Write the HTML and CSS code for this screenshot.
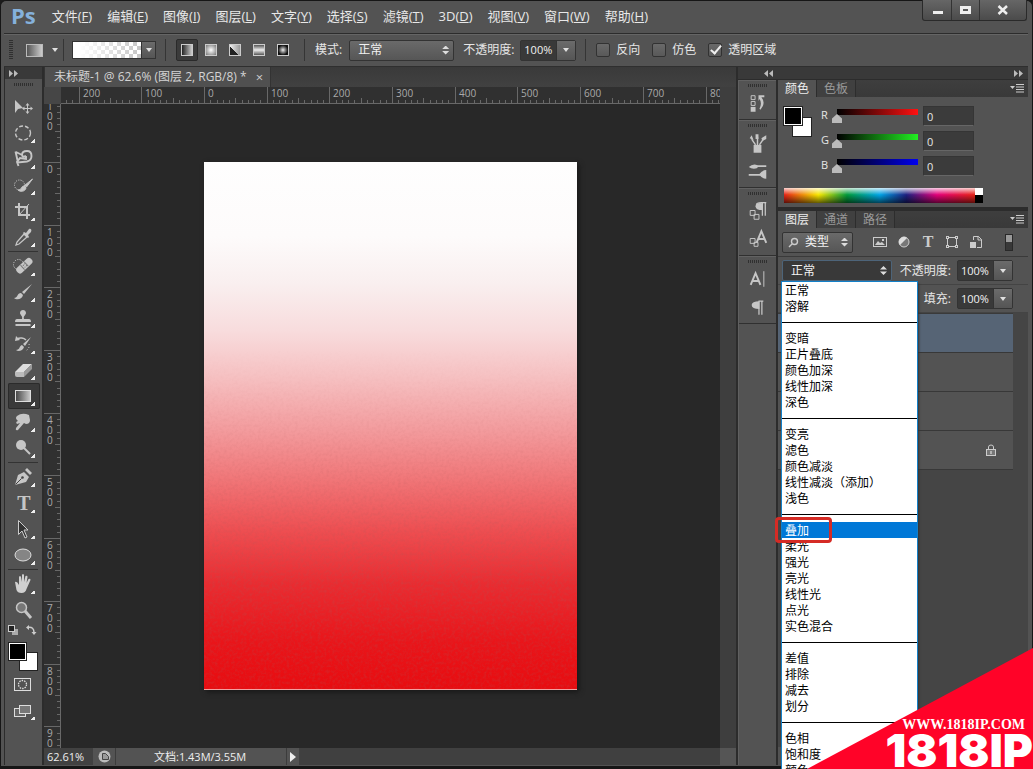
FILE: index.html
```html
<!DOCTYPE html>
<html lang="zh-CN">
<head>
<meta charset="utf-8">
<title>未标题-1</title>
<link rel="stylesheet" href="styles.css">
</head>
<body>
<div class="app">
  <header class="menubar">
    <span class="logo">Ps</span>
    <nav class="menus">
      <a href="#">文件(<u>F</u>)</a><a href="#">编辑(<u>E</u>)</a><a href="#">图像(<u>I</u>)</a><a href="#">图层(<u>L</u>)</a><a href="#">文字(<u>Y</u>)</a><a href="#">选择(<u>S</u>)</a><a href="#">滤镜(<u>T</u>)</a><a href="#">3D(<u>D</u>)</a><a href="#">视图(<u>V</u>)</a><a href="#">窗口(<u>W</u>)</a><a href="#">帮助(<u>H</u>)</a>
    </nav>
    <div class="winbtns">
      <button aria-label="最小化"><svg width="28" height="20"><path d="M10 11h10v3H10z" fill="#eee"/></svg></button>
      <button aria-label="最大化"><svg width="27" height="20"><path d="M9.500 7.500h8v5h-8z" fill="none" stroke="#eee" stroke-width="3"/></svg></button>
      <button class="wide" aria-label="关闭"><svg width="46" height="20"><path d="M18.500 6l8.500 8M27 6l-8.500 8" stroke="#eee" stroke-width="2.500"/></svg></button>
    </div>
  </header>

  <section class="options">
    <span class="grip-v"></span>
    <button class="preset" aria-label="渐变工具预设"><span class="grad-icon"></span><span class="caret"></span></button>
    <span class="divider"></span>
    <button class="gradient-pick" aria-label="编辑渐变"><span class="checker"></span><span class="drop"><span class="caret"></span></span></button>
    <span class="divider"></span>
    <div class="shapes">
      <button class="on" aria-label="线性渐变"><span class="gi linear"></span></button>
      <button aria-label="径向渐变"><span class="gi radial"></span></button>
      <button aria-label="角度渐变"><span class="gi angle"></span></button>
      <button aria-label="对称渐变"><span class="gi reflect"></span></button>
      <button aria-label="菱形渐变"><span class="gi diamond"></span></button>
    </div>
    <span class="divider"></span>
    <label class="field"><span>模式:</span><span class="pick mode"><select><option>正常</option></select><i class="updown"></i></span></label>
    <label class="field opacity"><span>不透明度:</span><span class="num"><input type="text" value="100%"><span class="drop"><span class="caret"></span></span></span></label>
    <span class="divider"></span>
    <div class="checks">
      <label><input type="checkbox">反向</label>
      <label><input type="checkbox">仿色</label>
      <label><input type="checkbox" checked>透明区域</label>
    </div>
  </section>

  <main class="work">
    <aside class="toolbar">
      <div class="strip"><svg width="10" height="7"><path d="M0 0l4 3.500-4 3.500zM5 0l4 3.500L5 7z" fill="#bbb"/></svg></div>
      <span class="grip-h"></span>
      <div class="tools">
        <button aria-label="移动"><svg viewBox="0 0 32 26"><path d="M7 6v13l3-4 5-1z" fill="#c6c6c6"/><path d="M19.500 10v9M15 14.500h9" stroke="#c6c6c6" fill="none"/><path d="M17.500 11.500l2-2.500 2 2.500zM17.500 17.500l2 2.500 2-2.500zM16.500 12.500l-2.500 2 2.500 2zM22.500 12.500l2.500 2-2.500 2z" fill="#c6c6c6"/></svg></button>
        <button class="more" aria-label="选框"><svg viewBox="0 0 32 26"><ellipse cx="15" cy="13" rx="7.500" ry="7" fill="none" stroke="#c6c6c6" stroke-width="1.400" stroke-dasharray="4 2"/></svg></button>
        <button class="more" aria-label="套索"><svg viewBox="0 0 32 26"><path d="M7.500 5.500l2.500 11 9-1q4.500-1 4.500-5.500 0-5-4.500-5-5 0-5 4 0 2.500 4 1M8 6l6 3M18 10v3l-6-1-3 4 1.500 4" fill="none" stroke="#c6c6c6" stroke-width="1.900"/></svg></button>
        <button class="more" aria-label="快速选择"><svg viewBox="0 0 32 26"><circle cx="11.500" cy="13" r="5" fill="none" stroke="#c6c6c6" stroke-dasharray="1.200 1.200"/><path d="M24.500 7l-6 8-2-1.500zM10 18c4 0 3-4 6-4l2 2c-1 4-6 4-8 2" fill="#c6c6c6" stroke="#c6c6c6"/></svg></button>
        <button class="more" aria-label="裁剪"><svg viewBox="0 0 32 26"><path d="M11 5v12h11M7 9h12v12" fill="none" stroke="#c6c6c6" stroke-width="2"/><path d="M11 17l10-11" stroke="#c6c6c6"/></svg></button>
        <button class="more" aria-label="吸管"><svg viewBox="0 0 32 26"><path d="M16 10l3 3-8 7-3 1 1-3z" fill="none" stroke="#c6c6c6" stroke-width="1.300"/><path d="M15 9l1-1 2 1 3-4c2-1 3 1 2 3l-3 3 1 2-1 1z" fill="#c6c6c6"/></svg></button>
        <hr>
        <button class="more" aria-label="修复"><svg viewBox="0 0 32 26"><circle cx="10.500" cy="11.500" r="5" fill="none" stroke="#c6c6c6" stroke-dasharray="1.200 1.200"/><g transform="rotate(-43 16 13)"><rect x="7" y="9.500" width="19" height="7" rx="3" fill="#c6c6c6"/><path d="M14 10v6M19 10v6" stroke="#777"/><path d="M15.500 12h1M17.500 12h1M15.500 14.500h1M17.500 14.500h1" stroke="#666"/></g></svg></button>
        <button class="more" aria-label="画笔"><svg viewBox="0 0 32 26"><path d="M24 5l-8 10-2-2zM6 19c4 0 3-5 7-5l2 2c-1 5-7 5-9 3" fill="#c6c6c6"/></svg></button>
        <button class="more" aria-label="图章"><svg viewBox="0 0 32 26"><path d="M14 14c1-3-2-4-2-6 0-4 6-4 6 0 0 2-3 3-2 6h5q2 0 2 3H7q0-3 2-3zM7.500 19h15v2h-15z" fill="#c6c6c6"/></svg></button>
        <button class="more" aria-label="历史画笔"><svg viewBox="0 0 32 26"><path d="M23 6l-6 9-2-2zM8 19c4 0 3-4 6-5l2 2c-1 4-6 5-8 3" fill="#c6c6c6"/><path d="M9 8c3-2 7-1 9 1" stroke="#c6c6c6" stroke-width="1.500" fill="none"/><path d="M7 10l1-5 4 4z" fill="#c6c6c6"/><path d="M21 13c1 3-1 6-4 7" stroke="#c6c6c6" fill="none" stroke-dasharray="1 2"/></svg></button>
        <button class="more" aria-label="橡皮擦"><svg viewBox="0 0 32 26"><path d="M7 15l8-8h9l-8 8z" fill="#ddd"/><path d="M7 15h9v5H9q-2 0-2-2z" fill="#bbb"/><path d="M16 15l8-8v5l-8 8z" fill="#999"/></svg></button>
        <button class="more on" aria-label="渐变"><svg viewBox="0 0 32 26"><defs><linearGradient id="tg"><stop stop-color="#444"/><stop offset="1" stop-color="#ccc"/></linearGradient></defs><rect x="7.500" y="7.500" width="15" height="11" fill="url(#tg)" stroke="#ddd"/></svg></button>
        <button class="more" aria-label="涂抹"><svg viewBox="0 0 32 26"><path d="M9 7q5-4 12-1l1 5q0 4-4 4l-2-1-6 7q-3 1-2-2l4-5-3 1q-2-2 1-3l-1-1q-2-2 0-4z" fill="#c6c6c6"/></svg></button>
        <button class="more" aria-label="减淡"><svg viewBox="0 0 32 26"><circle cx="13" cy="10" r="5" fill="#c6c6c6"/><path d="M16 13l6 6" stroke="#c6c6c6" stroke-width="2"/></svg></button>
        <hr>
        <button class="more" aria-label="钢笔"><svg viewBox="0 0 32 26"><path d="M7 21l3-10 6-3 5 5-3 5z" fill="#c6c6c6"/><path d="M17 6l2-2 5 5-2 2z" fill="#c6c6c6"/><path d="M7.500 20.500l6-6" stroke="#444"/><circle cx="14.500" cy="13.500" r="1.300" fill="#444"/></svg></button>
        <button class="more" aria-label="文字"><span class="type">T</span></button>
        <button class="more" aria-label="路径选择"><svg viewBox="0 0 32 26"><path d="M10.500 4.500v14l3.500-3.500 3 7 2-1-3-7h4z" fill="#333" stroke="#ccc"/></svg></button>
        <button class="more" aria-label="椭圆"><svg viewBox="0 0 32 26"><ellipse cx="15" cy="13" rx="8" ry="6" fill="#858585" stroke="#ddd"/></svg></button>
        <hr>
        <button class="more" aria-label="抓手"><svg viewBox="0 0 32 26"><path d="M7 11q2-1 4 3V6q1-2 2 0l1 5V4q1-2 2 0v7l1.500-6q2-1 2 1l-1 6 2-4q2-1 2 1l-4 9q-1 4-5 4t-5-3z" fill="#d0d0d0"/></svg></button>
        <button aria-label="缩放"><svg viewBox="0 0 32 26"><circle cx="13.500" cy="10.500" r="5" fill="#777" stroke="#c6c6c6" stroke-width="1.500"/><path d="M17 14l6 7" stroke="#c6c6c6" stroke-width="3"/></svg></button>
      </div>
      <div class="swatch-tools"><svg width="32" height="14" viewBox="0 0 32 14"><rect x="4" y="5" width="6" height="6" fill="#aaa"/><rect x=".5" y="1.500" width="6" height="6" fill="#222" stroke="#ccc"/><path d="M20 3.500q6-1 6 5" fill="none" stroke="#ccc" stroke-width="1.500"/><path d="M21 1v5l-3-2.500zM23.500 8h5L26 11z" fill="#ccc"/></svg></div>
      <div class="swatches"><i class="bg"></i><i class="fg"></i></div>
      <button class="mode-btn" aria-label="快速蒙版"><svg width="32" height="26"><rect x="6.500" y="7.500" width="16" height="12" fill="none" stroke="#ddd"/><circle cx="14.500" cy="13.500" r="4" fill="none" stroke="#ddd" stroke-width="1.300" stroke-dasharray="1.500 1"/></svg></button>
      <button class="mode-btn more" aria-label="屏幕模式"><svg width="32" height="26"><rect x="6.500" y="11.500" width="11" height="8" fill="#666" stroke="#ddd"/><rect x="11.500" y="8.500" width="11" height="8" fill="#777" stroke="#ddd"/></svg></button>
    </aside>

    <section class="document">
      <div class="tabs"><div class="tab"><span>未标题-1 @ 62.6% (图层 2, RGB/8) *</span><button aria-label="关闭文档">×</button></div></div>
      <div class="stage">
        <span class="corner"></span>
        <div class="ruler-h" id="rulerH"></div>
        <div class="ruler-v" id="rulerV"></div>
        <div class="pasteboard">
          <div class="artwork"><svg width="100%" height="100%"><filter id="grain"><feTurbulence type="fractalNoise" baseFrequency=".35" numOctaves="2"/><feColorMatrix values="0 0 0 0 .4  0 0 0 0 0.100  0 0 0 0 0.100  1.500 0 0 0 -.6"/></filter><rect width="100%" height="100%" filter="url(#grain)"/></svg></div>
        </div>
        <div class="scroll-v"></div>
      </div>
      <footer class="status">
        <span class="zoom">62.61%</span>
        <span class="status-icon"><svg width="13" height="13"><circle cx="6.500" cy="6.500" r="6" fill="#bbb"/><path d="M4.500 3.500h3l3 3v3h-6z" fill="#999" stroke="#444"/></svg></span>
        <span class="docsize">文档:1.43M/3.55M</span>
        <button aria-label="状态栏选项"><svg width="6" height="10"><path d="M0 0l6 5-6 5z" fill="#eee"/></svg></button>
        <span class="scroll-h"></span><span class="scroll-end"></span>
      </footer>
    </section>

    <div class="right">
      <div class="strip"><svg class="collapse" width="10" height="7"><path d="M4 0L0 3.500 4 7zM9 0L5 3.500 9 7z" fill="#bbb"/></svg><svg width="10" height="7"><path d="M0 0l4 3.500-4 3.500zM5 0l4 3.500L5 7z" fill="#bbb"/></svg></div>
      <aside class="dock">
        <div class="group"><button aria-label="历史记录"><svg viewBox="0 0 38 28"><path d="M12.500 6.500h4v4h-4zM12.500 12.500h4v4h-4z" fill="none" stroke="#c6c6c6"/><path d="M12 18h5v5h-5z" fill="#c6c6c6"/><path d="M20 6h6v2h-3q5 6-1 13l-1-1q3-6 0-10l-1 2z" fill="#c6c6c6"/></svg></button></div>
        <div class="group"><button aria-label="画笔预设"><svg viewBox="0 0 38 28"><path d="M15 16h8v8h-8z" fill="#c6c6c6"/><path d="M17 16l-4-6M19 16V8M21 16l4-6" stroke="#c6c6c6" stroke-width="1.500"/><path d="M11 9l2-3 2 5zM17 5h3v5h-3zM23 9l5-3 0 4-4 2z" fill="#c6c6c6"/></svg></button><button aria-label="画笔"><svg viewBox="0 0 38 28"><path d="M18 9h10M10 18h12" stroke="#c6c6c6" stroke-width="2"/><path d="M10 10q4-4 9-2v3q-5 2-9-1M21 17q3-4 7-4v9q-4 0-7-4" fill="#c6c6c6"/></svg></button></div>
        <div class="group"><button aria-label="段落样式"><svg viewBox="0 0 38 28"><path d="M11.500 13.500h5v5h-5z" fill="#555" stroke="#c6c6c6"/><path d="M15.500 17.500h5v5h-5z" fill="none" stroke="#c6c6c6"/><path d="M27 6v13M24 6v13M18 7.500q0-2 5-2h5" stroke="#c6c6c6" fill="none" stroke-width="1.300"/><path d="M24 6v7q-7 0-7-4t7-3" fill="#c6c6c6"/></svg></button><button aria-label="字符样式"><svg viewBox="0 0 38 28"><path d="M11.500 13.500h5v5h-5zM15.500 17.500h4v4h-4z" fill="none" stroke="#c6c6c6"/><path d="M18 18l5-12 5 12M20 14h6" fill="none" stroke="#c6c6c6" stroke-width="2"/></svg></button></div>
        <div class="group"><button aria-label="字符"><svg viewBox="0 0 38 28"><path d="M12 20l5-12 5 12M14 16h6" fill="none" stroke="#c6c6c6" stroke-width="2"/><path d="M25.500 6v16" stroke="#c6c6c6"/></svg></button><button aria-label="段落"><svg viewBox="0 0 38 28"><path d="M20 8h5M23.500 8v14M20.500 8v14" stroke="#c6c6c6" stroke-width="1.300"/><path d="M21 8v8q-8 0-8-4t8-4" fill="#c6c6c6"/></svg></button></div>
      </aside>
      <aside class="panels">
        <section class="color">
          <div class="panel-tabs"><button class="on">颜色</button><button>色板</button><button class="panel-menu" aria-label="面板菜单"><svg width="14" height="9"><path d="M0 2h5L2.500 5z" fill="#ccc"/><path d="M6 .5h8M6 3h8M6 5.500h8M6 8h8" stroke="#ccc"/></svg></button></div>
          <div class="color-body">
            <div class="pair"><i class="bg"></i><i class="fg"></i></div>
            <div class="sliders">
              <label><b>R</b><input class="red" type="range" min="0" max="255" value="0"><input type="text" value="0" aria-label="R"></label>
              <label><b>G</b><input class="green" type="range" min="0" max="255" value="0"><input type="text" value="0" aria-label="G"></label>
              <label><b>B</b><input class="blue" type="range" min="0" max="255" value="0"><input type="text" value="0" aria-label="B"></label>
            </div>
          </div>
          <div class="spectrum"><span class="rainbow"></span><span class="bw"></span></div>
        </section>
        <section class="layers">
          <div class="panel-tabs"><button class="on">图层</button><button>通道</button><button>路径</button><button class="panel-menu" aria-label="面板菜单"><svg width="14" height="9"><path d="M0 2h5L2.500 5z" fill="#ccc"/><path d="M6 .5h8M6 3h8M6 5.500h8M6 8h8" stroke="#ccc"/></svg></button></div>
          <div class="filters">
            <span class="pick kind"><svg width="11" height="11"><circle cx="6.500" cy="4.500" r="3" fill="none" stroke="#ccc" stroke-width="1.400"/><path d="M4 7l-3 3" stroke="#ccc" stroke-width="1.500"/></svg><select aria-label="类型"><option>类型</option></select><i class="updown"></i></span>
            <div class="filter-icons">
              <button aria-label="像素"><svg viewBox="0 0 14 14"><rect x=".5" y="2.500" width="13" height="9" fill="none" stroke="#ccc"/><path d="M2 10l3-4 2 2 2-1 3 3z" fill="#ccc"/><path d="M9 4h2v2H9z" fill="#ccc"/></svg></button>
              <button aria-label="调整"><svg viewBox="0 0 14 14"><circle cx="7" cy="7" r="5" fill="#777" stroke="#ccc"/><path d="M3 10A5 5 0 0 1 10 3z" fill="#ddd"/></svg></button>
              <button aria-label="文字"><span>T</span></button>
              <button aria-label="形状"><svg viewBox="0 0 14 14"><path d="M2.500 2.500h9v9h-9z" fill="none" stroke="#ccc"/><path d="M1 1h3v3H1zM10 1h3v3h-3zM1 10h3v3H1zM10 10h3v3h-3z" fill="#ccc"/><path d="M2 2h1v1H2zM11 2h1v1h-1zM2 11h1v1H2zM11 11h1v1h-1z" fill="#555"/></svg></button>
              <button aria-label="智能对象"><svg viewBox="0 0 14 14"><path d="M4.500 5V1.500h5l3 3v8H8" fill="none" stroke="#ccc"/><path d="M9 1v4h4" fill="none" stroke="#ccc"/><path d="M1 7h6v6H1z" fill="#ccc"/></svg></button>
            </div>
            <span class="toggle"></span>
          </div>
          <div class="row blend"><span class="pick dark"><select aria-label="混合模式"><option>正常</option></select><i class="updown"></i></span>
            <ul class="popup" role="listbox" aria-label="混合模式">
              <li role="option">正常</li><li role="option">溶解</li><li class="sep"></li>
              <li role="option">变暗</li><li role="option">正片叠底</li><li role="option">颜色加深</li><li role="option">线性加深</li><li role="option">深色</li><li class="sep"></li>
              <li role="option">变亮</li><li role="option">滤色</li><li role="option">颜色减淡</li><li role="option">线性减淡（添加）</li><li role="option">浅色</li><li class="sep"></li>
              <li role="option" class="sel" aria-selected="true">叠加<span class="mark"></span></li><li role="option">柔光</li><li role="option">强光</li><li role="option">亮光</li><li role="option">线性光</li><li role="option">点光</li><li role="option">实色混合</li><li class="sep"></li>
              <li role="option">差值</li><li role="option">排除</li><li role="option">减去</li><li role="option">划分</li><li class="sep"></li>
              <li role="option">色相</li><li role="option">饱和度</li><li role="option">颜色</li>
            </ul>
            <label class="field"><span>不透明度:</span><span class="num"><input type="text" value="100%"><span class="drop"><span class="caret"></span></span></span></label>
          </div>
          <div class="row fill"><label class="field"><span>填充:</span><span class="num"><input type="text" value="100%"><span class="drop"><span class="caret"></span></span></span></label></div>
          <div class="layer-list">
            <div class="layer current"></div><div class="layer"></div><div class="layer"></div>
            <div class="layer"><svg width="11" height="13"><rect x=".5" y="5.500" width="9" height="6" fill="#777" stroke="#ccc"/><path d="M2.500 5V3q0-2 2.500-2t2.500 2v2" fill="none" stroke="#ccc"/><path d="M5 7v3" stroke="#eee"/></svg></div>
          </div>
          <div class="panel-foot"></div>
        </section>
      </aside>
    </div>
  </main>
</div>
<div class="banner"><span class="site">WWW.1818IP.COM</span><strong>1818IP</strong></div>
<script src="rulers.js"></script>
</body>
</html>
```

FILE: styles.css
```css
* { box-sizing: border-box; }
body {
  margin: 0;
  overflow: hidden;
  background: #1b1b1b;
  color: #e6e6e6;
  font: 12px/16px "Open Sans", "Noto Sans CJK SC", sans-serif;
}
button, input, select { font: inherit; color: inherit; margin: 0; padding: 0; border: 0; background: none; border-radius: 0; }
button { display: flex; align-items: center; justify-content: center; }
select { appearance: none; outline: 0; }
svg { display: block; }
.app {
  height: 100vh;
  display: grid;
  grid-template-rows: 32px 34px 1fr;
  padding: 0 4px 1px 3px;
  background: #535353;
  border: solid #161616;
  border-width: 1px 1px 3px;
  border-radius: 6px 6px 0 0;
}

/* menu bar */
.menubar { display: flex; align-items: flex-start; }
.logo { margin: 3px 16px 0 7px; color: #85b1dc; font: bold 22px/22px "Open Sans", sans-serif; }
.menus { display: flex; gap: 15px; flex: 1; padding-top: 5px; font-size: 13px; line-height: 20px; }
.menus a { color: #e8e8e8; text-decoration: none; white-space: nowrap; }
.winbtns { display: flex; margin: -1px 1px 0 0; border: 1px solid #2a2a2a; border-top: 0; border-radius: 0 0 3px 3px; background: linear-gradient(#666, #4b4b4b); }
.winbtns button { height: 20px; border-right: 1px solid #333; }
.winbtns button:last-child { border: 0; }

/* option bar */
.options { display: flex; align-items: center; border-top: 1px solid #2c2c2c; border-bottom: 1px solid #2f2f2f; box-shadow: inset 0 1px #656565; padding-left: 5px; white-space: nowrap; }
.grip-v { width: 4px; height: 20px; background: repeating-linear-gradient(#303030 0 1px, transparent 1px 2px); }
.preset { gap: 9px; margin-left: 13px; }
.grad-icon { width: 17px; height: 13px; border: 1px solid #bbb; background: linear-gradient(90deg, #555, #ccc); }
.caret { border: 3px solid transparent; border-top: 4px solid #e0e0e0; border-bottom: 0; }
.divider { width: 1px; height: 22px; background: #353535; margin: 0 10px 0 9px; }
.divider:nth-of-type(2) { margin: 0 8px 0 5px; }
.gradient-pick { height: 18px; border: 1px solid #333; }
.checker { width: 68px; height: 16px; background: linear-gradient(90deg, #fff 10%, transparent), repeating-conic-gradient(#c5c5c5 0 25%, #fff 0 50%) 0 0 / 8px 8px; }
.drop { display: grid; place-items: center; width: 19px; align-self: stretch; background: linear-gradient(#6b6b6b, #555); border-left: 1px solid #333; }
.gradient-pick .drop { width: 14px; }
.shapes { display: flex; align-items: center; gap: 2px; margin-right: 1px; }
.shapes button { width: 22px; height: 22px; }
.shapes .on { background: #3b3b3b; border: 1px solid #2a2a2a; border-radius: 2px; }
.gi { width: 12px; height: 12px; border: 1px solid #ccc; }
.linear { background: linear-gradient(90deg, #222, #ccc); }
.radial { background: radial-gradient(#fff, #777); }
.angle { background: linear-gradient(45deg, #222 40%, transparent 42%), linear-gradient(90deg, #eee, #999); }
.reflect { background: linear-gradient(#555, #eee 50%, #555); }
.diamond { background: radial-gradient(#eee, #111 70%); }
.field { display: flex; align-items: center; gap: 6px; }
.pick { position: relative; display: flex; align-items: center; height: 21px; border: 1px solid #333; border-radius: 2px; background: linear-gradient(#6a6a6a, #565656); }
.pick select { flex: 1; min-width: 0; padding-left: 8px; color: #f2f2f2; }
.updown { width: 7px; height: 9px; margin-right: 4px; background: #ddd; clip-path: polygon(50% 0, 100% 40%, 0 40%, 0 60%, 100% 60%, 50% 100%, 0 60%, 0 40%); }
.mode { width: 105px; margin-left: 1px; }
.opacity { margin-left: 9px; }
.num { display: flex; height: 21px; border: 1px solid #333; border-radius: 2px; background: #393939; }
.num input { width: 35px; padding-left: 3px; font-size: 11px; color: #f2f2f2; }
.checks { display: flex; gap: 12px; }
.checks label { display: flex; align-items: center; gap: 6px; }
.checks input { appearance: none; width: 14px; height: 14px; background: linear-gradient(#696969, #595959); border: 1px solid #323232; border-radius: 2px; }
.checks input:checked { position: relative; }
.checks input:checked::after { content: ""; position: absolute; left: 4px; top: -1px; width: 4px; height: 9px; border: solid #eee; border-width: 0 2px 2px 0; transform: rotate(40deg); }

/* work area */
.work { display: flex; min-height: 0; background: #2c2c2c; }
.strip { height: 12px; flex: none; background: #393939; display: flex; align-items: center; padding: 0 4px; }
.toolbar { width: 38px; display: flex; flex-direction: column; background: #535353; border-left: 1px solid #2c2c2c; }
.grip-h { flex: none; width: 19px; height: 3px; margin: 4px 0 8px 9px; background: repeating-linear-gradient(90deg, #303030 0 1px, transparent 1px 2px); }
.tools { display: flex; flex-direction: column; padding: 0 3px; }
.tools button, .mode-btn { position: relative; width: 32px; height: 26px; flex: none; }
.tools svg { width: 32px; height: 26px; }
.tools hr { width: 30px; height: 1px; margin: 1px 0; border: 0; background: #333; }
.tools .on { background: #3a3a3a; box-shadow: inset 0 0 0 1px #2b2b2b; border-radius: 2px; }
.more::after { content: ""; position: absolute; right: 5px; bottom: 3px; width: 4px; height: 4px; background: linear-gradient(135deg, transparent 50%, #eee 50%); }
.type { width: 30px; color: #c6c6c6; font: bold 20px/26px "Liberation Serif", serif; }
.swatch-tools { padding: 1px 0 0 3px; margin-bottom: 4px; }
.swatches { display: grid; height: 29px; padding: 0 4px 0 3px; }
.swatches i, .pair i { grid-area: 1 / 1; width: 19px; height: 19px; border: 1px solid #222; box-shadow: inset 0 0 0 1px #fff; background: #000; }
.swatches .bg, .pair .bg { background: #fff; justify-self: end; align-self: end; }
.mode-btn { margin-left: 3px; }

/* document */
.document { flex: 1; min-width: 0; display: flex; flex-direction: column; margin: 0 2px; background: #292929; }
.tabs { height: 20px; flex: none; background: linear-gradient(#3a3a3a, #414141); display: flex; }
.tab { display: flex; align-items: center; gap: 9px; padding: 0 7px 0 9px; background: #505050; border: 1px solid #333; border-width: 0 1px; white-space: nowrap; font-size: 12px; color: #d4d4d4; }
.tab button { color: #ccc; font-size: 13px; }
.stage { flex: 1; min-height: 0; display: grid; grid-template: 17px 1fr / 17px 1fr 16px; }
.corner { background: #464646; }
.ruler-h, .ruler-v { overflow: hidden; background: #303030; fill: #aaa; }
.ruler-h svg, .ruler-v svg { font: 10px "Open Sans", sans-serif; }
.ruler-h { grid-column: 2; }
.ruler-v { grid-area: 2 / 1; }
.pasteboard { grid-area: 2 / 2; min-height: 0; display: flex; align-items: center; justify-content: center; overflow: hidden; background: #282828; }
.artwork { height: 82%; aspect-ratio: 373 / 528; box-shadow: 2px 2px 5px #181818; border-bottom: 1px solid #f3a0a0; background: linear-gradient(#fefefe 0, #fdfbfb 14%, #f9efef 23%, #f8dcdd 32%, #f6c0c1 41%, #f39b9d 51%, #f17779 60%, #ee4e51 70%, #e92c31 80%, #e9151a 91%, #e80c10); }
.artwork svg { opacity: 0.35; -webkit-mask-image: linear-gradient(transparent 35%, #000 80%); mask-image: linear-gradient(transparent 35%, #000 80%); }
.scroll-v { grid-area: 1 / 3 / 3 / 4; background: #3e3e3e; }
.status { display: flex; height: 17px; flex: none; background: #535353; align-items: stretch; white-space: nowrap; color: #eee; font-size: 11px; line-height: 17px; }
.zoom { width: 49px; padding-left: 3px; background: #414141; }
.status-icon { width: 23px; display: grid; place-items: center; border-right: 1px solid #3c3c3c; }
.docsize { width: 171px; padding-left: 38px; border-right: 1px solid #3c3c3c; }
.status button { width: 12px; }
.scroll-h { flex: 1; background: #404040; }
.scroll-end { width: 16px; background: #555; }

/* right side */
.right { width: 290px; flex: none; display: grid; grid-template: 13px 1fr / 38px 1fr; column-gap: 2px; }
.right .strip { grid-column: 1 / 3; height: 12px; justify-content: space-between; padding-left: 26px; }
.dock { background: #535353; border-left: 1px solid #606060; }
.group { position: relative; display: flex; flex-direction: column; padding: 9px 0 2px; border-bottom: 1px solid #303030; box-shadow: inset 0 1px #626262; }
.group::before { content: ""; position: absolute; left: 9px; top: 4px; width: 19px; height: 3px; background: repeating-linear-gradient(90deg, #303030 0 1px, transparent 1px 2px); }
.group button, .group svg { width: 37px; height: 28px; }
.panels { min-width: 0; min-height: 0; display: flex; flex-direction: column; gap: 4px; }
.color { height: 127px; flex: none; background: #535353; }
.panel-tabs { display: flex; height: 17px; background: linear-gradient(#3e3e3e, #393939); }
.panel-tabs button { padding: 0 7px; border-right: 1px solid #2d2d2d; color: #999; background: #404040; }
.panel-tabs .on { background: #535353; color: #eee; }
.panel-tabs .panel-menu { margin-left: auto; padding: 0 4px; border: 0; background: none; }
.color-body { display: flex; padding: 9px 0 0 5px; }
.pair { display: grid; width: 29px; height: 31px; }
.pair i { width: 20px; height: 20px; }
.sliders { margin-left: 9px; display: grid; gap: 5px; }
.sliders label { display: flex; height: 20px; align-items: flex-start; }
.sliders b { width: 11px; font-weight: 400; font-size: 11px; line-height: 18px; }
.sliders input[type="range"] { appearance: none; width: 91px; height: 17px; background-repeat: no-repeat; background-position: 5px 3px; background-size: calc(100% - 10px) 6px; }
.sliders input::-webkit-slider-runnable-track { height: 17px; }
.sliders input::-webkit-slider-thumb { appearance: none; width: 10px; height: 9px; margin-top: 8px; background: #bbb; clip-path: polygon(50% 0, 100% 50%, 100% 100%, 0 100%, 0 50%); }
.red { background-image: linear-gradient(90deg, #000, #f11); }
.green { background-image: linear-gradient(90deg, #000, #2e2); }
.blue { background-image: linear-gradient(90deg, #000, #00e); }
.sliders input[type="text"] { width: 51px; height: 20px; padding-left: 3px; background: #3b3b3b; border: 1px solid #353535; border-bottom-color: #666; font-size: 11px; }
.spectrum { display: flex; width: 199px; height: 15px; margin: 12px 0 0 6px; }
.rainbow { flex: 1; background: linear-gradient(#ffffffcc, transparent 45%, #00000099), linear-gradient(90deg, #e62317, #f7e600 18%, #019a3b 33%, #00a5e6 50%, #1c2080 64%, #e3007a 80%, #e62317); }
.bw { width: 8px; background: linear-gradient(#fff 50%, #000 50%); }
.layers { position: relative; flex: 1; min-height: 0; display: flex; flex-direction: column; background: #454545; }
.filters { display: flex; align-items: center; height: 29px; background: #535353; padding-left: 4px; border-bottom: 1px solid #3a3a3a; }
.kind { width: 71px; padding-left: 5px; }
.kind select { padding-left: 6px; }
.filter-icons { display: flex; gap: 10px; margin-left: 20px; }
.filter-icons button, .filter-icons svg { width: 14px; height: 14px; }
.filter-icons span { color: #ccc; font: bold 16px/14px "Liberation Serif", serif; }
.toggle { width: 8px; height: 17px; margin: 0 15px 0 auto; border: 1px solid #292929; background: linear-gradient(#999 45%, #383838 45%); }
.row { display: flex; height: 28px; align-items: center; background: #535353; padding: 0 15px 0 4px; border-bottom: 1px solid #444; }
.row .field { margin-left: auto; }
.blend { position: relative; }
.dark { width: 110px; background: #393939; border-color: #4d6479; }
.layer-list { margin-right: 15px; border-top: 1px solid #3a3a3a; }
.layer { height: 39px; background: #535353; border-bottom: 1px solid #383838; display: flex; align-items: center; justify-content: flex-end; padding-right: 16px; }
.current { background: #566475; }
.panel-foot { height: 18px; margin-top: auto; background: #535353; }
.popup { position: absolute; z-index: 2; left: 3px; top: 24px; width: 137px; margin: 0; padding: 0; border: 1px solid #1380c8; background: #fff; color: #000; list-style: none; box-shadow: 1px 2px 2px #333; }
.popup li { height: 16px; padding-left: 3px; line-height: 18px; }
.popup .sep { background: linear-gradient(#000, #000) 0 8px / 100% 1px no-repeat; }
.popup .sel { position: relative; background: #0078d7; color: #fff; }
.mark { position: absolute; left: -7px; top: -5px; width: 57px; height: 26px; border: 3px solid #d52b25; border-radius: 4px; }

/* corner banner */
.banner { position: fixed; z-index: 5; right: 0; bottom: 0; width: 226px; height: 121px; overflow: hidden; background: #ff0328; clip-path: polygon(100% 0, 100% 100%, 0 100%); color: #fff; display: flex; flex-direction: column; justify-content: flex-end; align-items: flex-end; }
.site { margin-right: 8px; font: bold 14px/14px "Liberation Serif", serif; }
.banner strong { font: 900 46px/37px Inter, sans-serif; }
```

FILE: rulers.js
```js
const STEP = 62.7;
const NS = "http://www.w3.org/2000/svg";

function add(svg, name, attrs, text) {
  const el = document.createElementNS(NS, name);
  for (const key in attrs) el.setAttribute(key, attrs[key]);
  if (text) el.textContent = text;
  svg.appendChild(el);
}

function ruler(id, origin, vertical) {
  const host = document.getElementById(id);
  const svg = document.createElementNS(NS, "svg");
  const length = vertical ? host.clientHeight : host.clientWidth;
  const first = Math.ceil((-8 - origin) / STEP * 10);
  const last = Math.floor((length - origin) / STEP * 10);
  svg.setAttribute("width", host.clientWidth);
  svg.setAttribute("height", host.clientHeight);
  for (let n = first; n <= last; n++) {
    const p = Math.round(origin + n * STEP / 10);
    const size = n % 10 === 0 ? 17 : n % 5 === 0 ? 6 : 4;
    add(svg, "rect", vertical
      ? { x: 17 - size, y: p, width: size, height: 1, fill: "#686868" }
      : { x: p, y: 17 - size, width: 1, height: size, fill: "#686868" });
    if (n % 10) continue;
    const label = String(Math.abs(n * 10));
    if (vertical) {
      [...label].forEach((d, i) => {
        const y = p + 11 + i * 10;
        if (y < length) add(svg, "text", { x: 3, y }, d);
      });
    } else add(svg, "text", { x: p + 4, y: 10 }, label);
  }
  if (vertical) add(svg, "rect", { x: 16, y: 0, width: 1, height: length, fill: "#686868" });
  else add(svg, "rect", { x: 0, y: 16, width: length, height: 1, fill: "#686868" });
  host.appendChild(svg);
}

const art = document.querySelector(".artwork").getBoundingClientRect();
ruler("rulerH", art.left - document.getElementById("rulerH").getBoundingClientRect().left, false);
ruler("rulerV", art.top - document.getElementById("rulerV").getBoundingClientRect().top, true);
```
